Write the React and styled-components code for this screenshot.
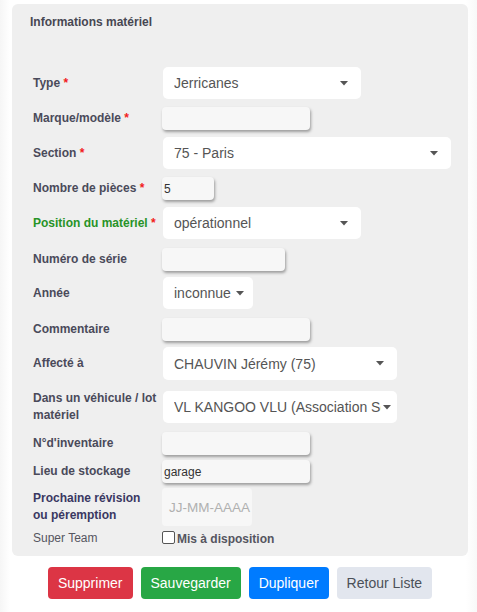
import React from "react";
import styled, { createGlobalStyle } from "styled-components";

const GlobalStyle = createGlobalStyle`
  html, body {
    margin: 0;
    padding: 0;
    background: #ffffff;
    font-family: "Liberation Sans", Arial, sans-serif;
  }
`;

const rows = [
  { label: "Type", required: true, kind: "select", value: "Jerricanes", width: 198, mt: 38 },
  { label: "Marque/modèle", required: true, kind: "input", value: "", width: 148, mt: 8 },
  { label: "Section", required: true, kind: "select", value: "75 - Paris", width: 288, mt: 7 },
  { label: "Nombre de pièces", required: true, kind: "input", value: "5", width: 52, mt: 8 },
  { label: "Position du matériel", required: true, green: true, kind: "select", value: "opérationnel", width: 198, mt: 7 },
  { label: "Numéro de série", kind: "input", value: "", width: 123, mt: 9 },
  { label: "Année", kind: "select", value: "inconnue", width: 90, tight: true, mt: 6 },
  { label: "Commentaire", kind: "input", value: "", width: 148, mt: 9 },
  { label: "Affecté à", kind: "select", value: "CHAUVIN Jérémy (75)", width: 234, mt: 6, h: 33 },
  { label: "Dans un véhicule / lot\nmatériel", kind: "select", value: "VL KANGOO VLU (Association Secourisme)", width: 234, mt: 10, clip: true },
  { label: "N°d'inventaire", kind: "input", value: "", width: 148, mt: 8 },
  { label: "Lieu de stockage", kind: "input", value: "garage", width: 148, mt: 5 },
  { label: "Prochaine révision\nou péremption", navy: true, kind: "date", width: 90, mt: 5 },
];

function Caret() {
  return (
    <CaretIcon width="8" height="5" viewBox="0 0 8 5">
      <path d="M0 0 L8 0 L4 4.5 Z" fill="#555" />
    </CaretIcon>
  );
}

function Field({ row }) {
  if (row.kind === "select") {
    return (
      <Select $w={row.width} $h={row.h || 32} $tight={row.tight} $clip={row.clip}>
        <SelectText>{row.value}</SelectText>
        <Caret />
      </Select>
    );
  }
  if (row.kind === "date") {
    return <DateBox $w={row.width}>JJ-MM-AAAA</DateBox>;
  }
  return <TextBox $w={row.width}>{row.value}</TextBox>;
}

export default function App() {
  return (
    <>
      <GlobalStyle />
      <Page>
        <Card>
          <CardTitle>Informations matériel</CardTitle>
          {rows.map((row) => (
            <Row key={row.label} $mt={row.mt}>
              <Label $green={row.green} $navy={row.navy}>
                {row.label}
                {row.required && <Star> *</Star>}
              </Label>
              <Field row={row} />
            </Row>
          ))}
          <Row $mt={4}>
            <PlainLabel>Super Team</PlainLabel>
            <CheckWrap>
              <CheckBox />
              <CheckText>Mis à disposition</CheckText>
            </CheckWrap>
          </Row>
        </Card>
        <Buttons>
          <Button $bg="#dc3545" $fg="#fff">Supprimer</Button>
          <Button $bg="#28a745" $fg="#fff">Sauvegarder</Button>
          <Button $bg="#007bff" $fg="#fff">Dupliquer</Button>
          <Button $bg="#e2e6ee" $fg="#4b5058">Retour Liste</Button>
        </Buttons>
      </Page>
    </>
  );
}

const Page = styled.div`
  width: 477px;
  padding: 4px 9px 0 12px;
  box-sizing: border-box;
  background: linear-gradient(to right, #f6f6f6 0px, #ffffff 10px, #ffffff 466px, #f8f8f8 477px);
  min-height: 612px;
`;

const Card = styled.div`
  width: 456px;
  box-sizing: border-box;
  background: #efefef;
  border-radius: 6px;
  padding: 11px 0 9px 21px;
`;

const CardTitle = styled.div`
  margin-left: -3px;
  font-size: 12px;
  font-weight: bold;
  color: #474752;
  line-height: 14px;
`;

const Row = styled.div`
  display: flex;
  align-items: center;
  margin-top: ${(p) => p.$mt}px;
`;

const Label = styled.div`
  width: 129px;
  flex-shrink: 0;
  font-size: 12px;
  font-weight: bold;
  line-height: 17px;
  white-space: pre-line;
  color: ${(p) => (p.$green ? "#279327" : p.$navy ? "#3a3862" : "#4a4a5a")};
`;

const PlainLabel = styled(Label)`
  font-weight: normal;
  color: #555560;
`;

const Star = styled.span`
  color: #f21c1c;
`;

const Select = styled.div`
  width: ${(p) => p.$w}px;
  height: ${(p) => p.$h}px;
  margin-left: 1px;
  box-sizing: border-box;
  background: #ffffff;
  border-radius: 5px;
  display: flex;
  align-items: center;
  padding: 0 ${(p) => (p.$tight ? 9 : p.$clip ? 6 : 13)}px 0 11px;
  gap: ${(p) => (p.$tight ? 1 : p.$clip ? 2 : 6)}px;
  font-size: 14px;
  color: #555;
`;

const SelectText = styled.span`
  flex: 1;
  white-space: nowrap;
  overflow: hidden;
  text-overflow: clip;
  line-height: 18px;
`;

const CaretIcon = styled.svg`
  flex-shrink: 0;
  display: block;
`;

const TextBox = styled.div`
  width: ${(p) => p.$w}px;
  height: 23px;
  box-sizing: border-box;
  background: #f7f7f7;
  border-radius: 4px;
  box-shadow: 1px 2px 3px rgba(0, 0, 0, 0.35);
  font-size: 12px;
  color: #333;
  padding: 0 2px;
  display: flex;
  align-items: center;
`;

const DateBox = styled.div`
  width: ${(p) => p.$w}px;
  height: 38px;
  box-sizing: border-box;
  background: #f7f7f7;
  border-radius: 4px;
  font-size: 13.5px;
  color: #b0b0b0;
  padding-left: 7px;
  display: flex;
  align-items: center;
  white-space: nowrap;
`;

const CheckWrap = styled.div`
  display: flex;
  align-items: center;
  gap: 2px;
`;

const CheckBox = styled.span`
  width: 13px;
  height: 13px;
  box-sizing: border-box;
  border: 1px solid #555;
  border-radius: 2px;
  background: #fff;
  margin-top: -3px;
`;

const CheckText = styled.span`
  font-size: 12px;
  font-weight: bold;
  color: #555560;
`;

const Buttons = styled.div`
  width: 456px;
  display: flex;
  justify-content: center;
  gap: 8px;
  margin-top: 11px;
`;

const Button = styled.button`
  height: 32px;
  border: none;
  border-radius: 4px;
  padding: 0 10px;
  font-family: "Liberation Sans", Arial, sans-serif;
  font-size: 14px;
  background: ${(p) => p.$bg};
  color: ${(p) => p.$fg};
`;
